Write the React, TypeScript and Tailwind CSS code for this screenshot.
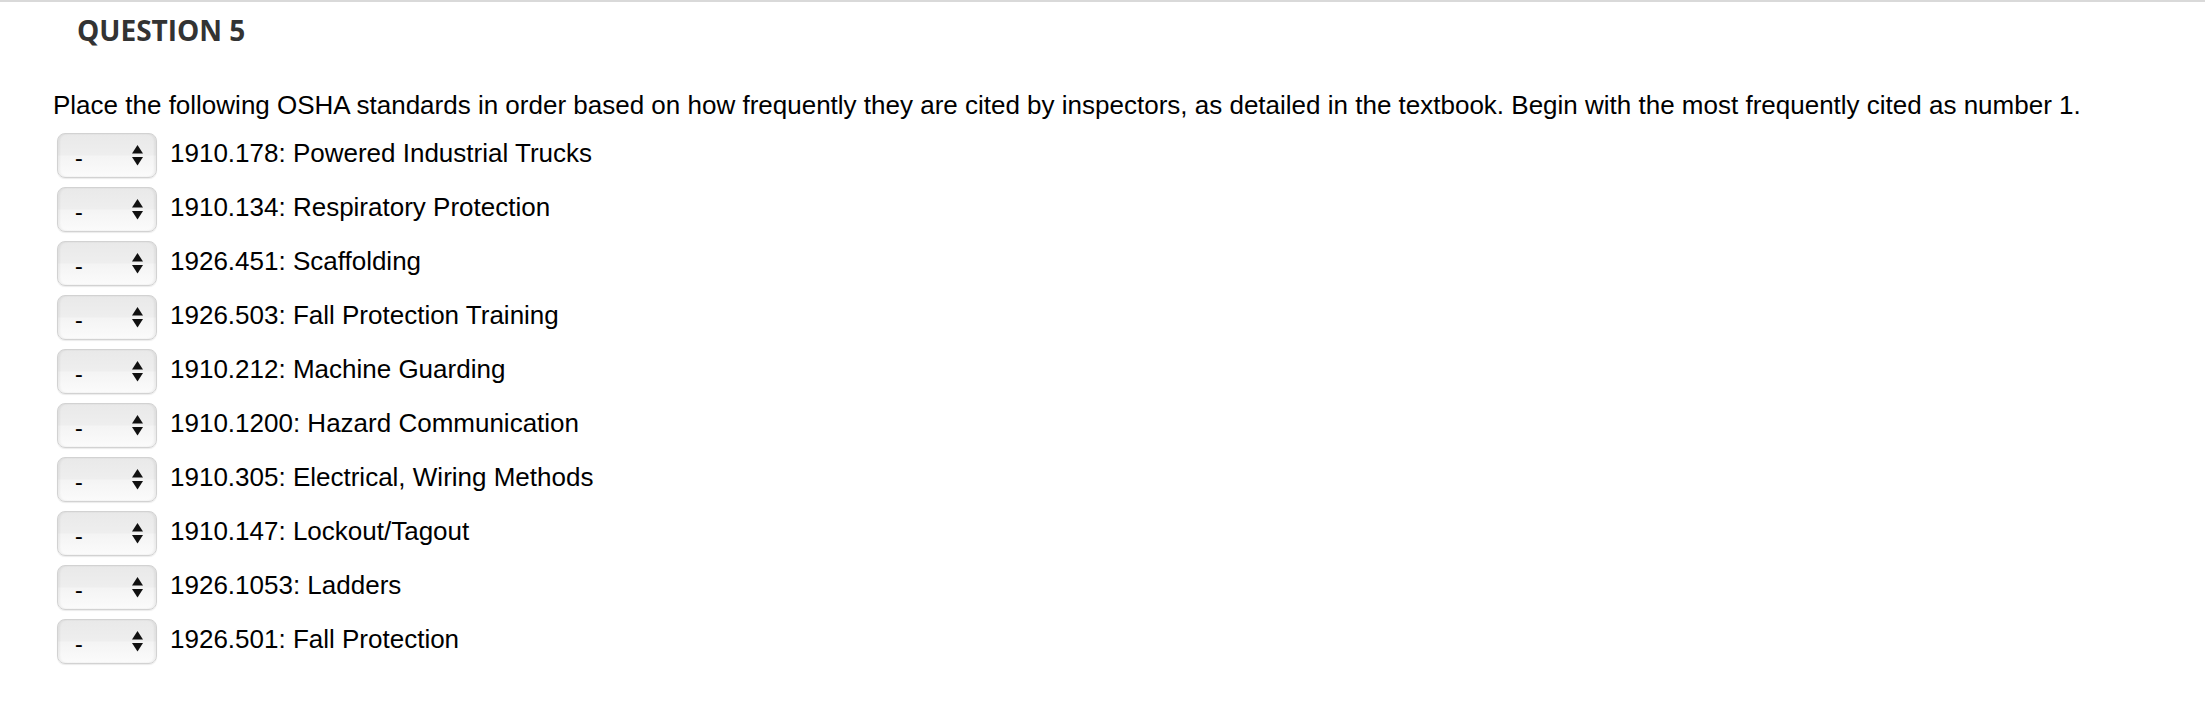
import React from "react";

const standards = [
  "1910.178: Powered Industrial Trucks",
  "1910.134: Respiratory Protection",
  "1926.451: Scaffolding",
  "1926.503: Fall Protection Training",
  "1910.212: Machine Guarding",
  "1910.1200: Hazard Communication",
  "1910.305: Electrical, Wiring Methods",
  "1910.147: Lockout/Tagout",
  "1926.1053: Ladders",
  "1926.501: Fall Protection",
];

function RankSelect() {
  return (
    <div className="flex h-[45px] w-[100px] shrink-0 items-center justify-between rounded-[8px] border border-[#d2d2d2] bg-[linear-gradient(to_bottom,#e9e9e9_0%,#eeeeee_48%,#f4f4f4_52%,#fbfbfb_100%)] pl-[17px] pr-[13px] shadow-[inset_2px_0_2px_rgba(0,0,0,0.05),inset_-2px_0_2px_rgba(0,0,0,0.05),0_1px_1px_rgba(0,0,0,0.08)]">
      <span className="mt-[2px] text-[24px] leading-none text-black">-</span>
      <svg width="11" height="21" viewBox="0 0 11 21">
        <path d="M5.5 0 L11 8.5 L0 8.5 Z" fill="#111" />
        <path d="M0 12 L11 12 L5.5 20.5 Z" fill="#111" />
      </svg>
    </div>
  );
}

export default function App() {
  return (
    <div className="min-h-[714px] w-full border-t-2 border-[#d9d9d9] bg-white">
      <h2 className="mt-[9px] pl-[77px] font-['Open_Sans',sans-serif] text-[28px] font-bold leading-[38px] text-[#333333]">
        QUESTION 5
      </h2>
      <p className="mt-[41px] pl-[53px] font-['Liberation_Sans',Arial,sans-serif] text-[26px] leading-[30px] text-black">
        Place the following OSHA standards in order based on how frequently
        they are cited by inspectors, as detailed in the textbook. Begin with
        the most frequently cited as number 1.
      </p>
      <div className="mt-[13px] flex flex-col gap-[9px] pl-[57px]">
        {standards.map((item, i) => (
          <div key={i} className="flex items-start gap-[13px]">
            <RankSelect />
            <span className="mt-[5px] font-['Liberation_Sans',Arial,sans-serif] text-[26px] leading-[30px] text-black">
              {item}
            </span>
          </div>
        ))}
      </div>
    </div>
  );
}
